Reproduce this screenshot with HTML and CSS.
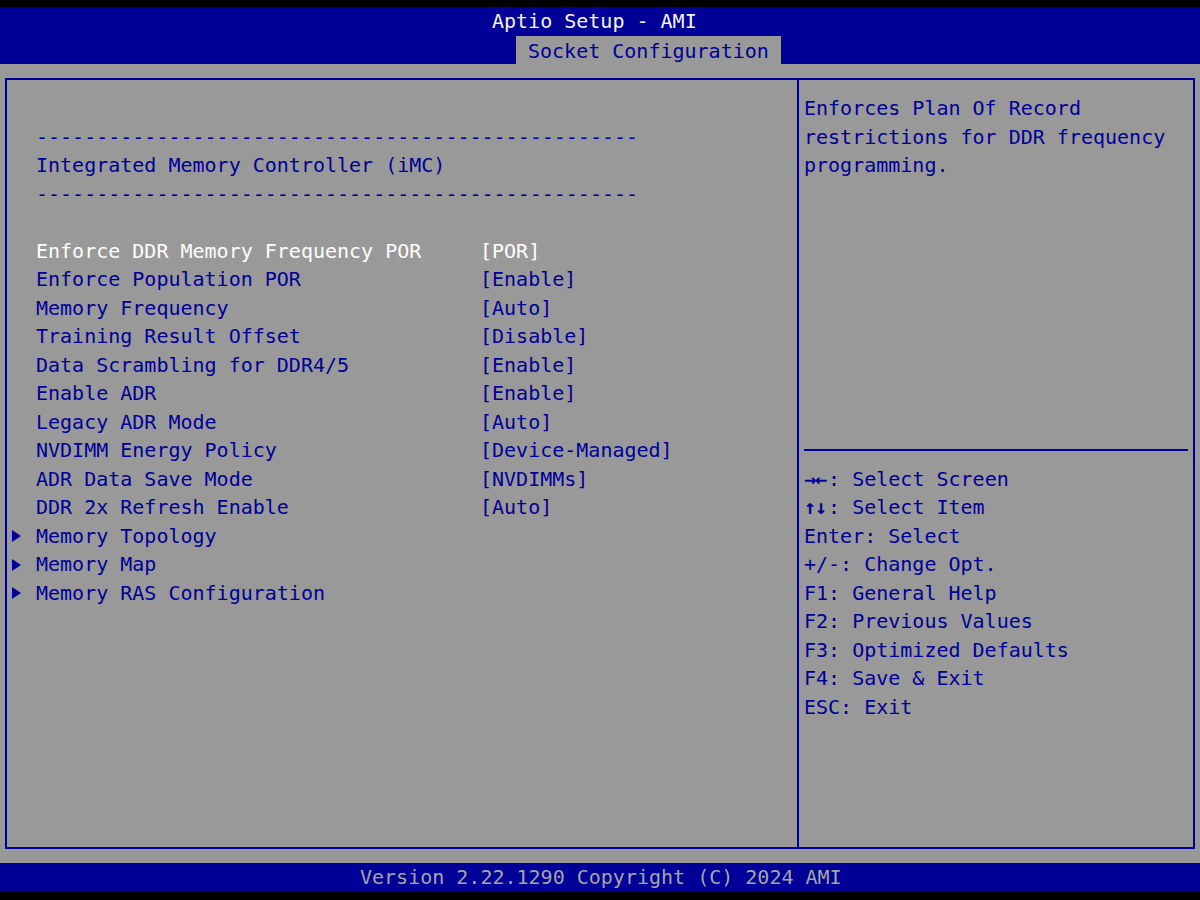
FILE: index.html
```html
<!DOCTYPE html>
<html lang="en">
<head>
    <meta charset="UTF-8">
    <title>Aptio Setup - AMI</title>
    <link rel="stylesheet" href="styles.css">
</head>
<body>
    <!-- title bar with the active tab -->
    <div class="header">
        <div class="title">Aptio Setup - AMI</div>
        <div class="tabs">
            <div class="tab">Socket Configuration</div>
        </div>
    </div>

    <div class="screen">
        <div class="frame">
            <!-- settings list -->
            <div class="pane-left">
                <div class="row"></div>
                <div class="row"><span></span><span class="text">--------------------------------------------------</span></div>
                <div class="row"><span></span><span class="text">Integrated Memory Controller (iMC)</span></div>
                <div class="row"><span></span><span class="text">--------------------------------------------------</span></div>
                <div class="row"></div>

                <div class="row item selected"><span></span><span>Enforce DDR Memory Frequency POR</span><span>[POR]</span></div>
                <div class="row item"><span></span><span>Enforce Population POR</span><span>[Enable]</span></div>
                <div class="row item"><span></span><span>Memory Frequency</span><span>[Auto]</span></div>
                <div class="row item"><span></span><span>Training Result Offset</span><span>[Disable]</span></div>
                <div class="row item"><span></span><span>Data Scrambling for DDR4/5</span><span>[Enable]</span></div>
                <div class="row item"><span></span><span>Enable ADR</span><span>[Enable]</span></div>
                <div class="row item"><span></span><span>Legacy ADR Mode</span><span>[Auto]</span></div>
                <div class="row item"><span></span><span>NVDIMM Energy Policy</span><span>[Device-Managed]</span></div>
                <div class="row item"><span></span><span>ADR Data Save Mode</span><span>[NVDIMMs]</span></div>
                <div class="row item"><span></span><span>DDR 2x Refresh Enable</span><span>[Auto]</span></div>

                <div class="row item"><span class="submenu"></span><span>Memory Topology</span></div>
                <div class="row item"><span class="submenu"></span><span>Memory Map</span></div>
                <div class="row item"><span class="submenu"></span><span>Memory RAS Configuration</span></div>
            </div>

            <!-- help text and key legend -->
            <div class="pane-right">
                <div class="help">
                    Enforces Plan Of Record<br>
                    restrictions for DDR frequency<br>
                    programming.
                </div>
                <div class="divider"><hr></div>
                <div class="keys">
                    <div><span class="arrow">&rarr;&larr;</span>: Select Screen</div>
                    <div><span class="arrow">&uarr;&darr;</span>: Select Item</div>
                    <div>Enter: Select</div>
                    <div>+/-: Change Opt.</div>
                    <div>F1: General Help</div>
                    <div>F2: Previous Values</div>
                    <div>F3: Optimized Defaults</div>
                    <div>F4: Save &amp; Exit</div>
                    <div>ESC: Exit</div>
                </div>
            </div>
        </div>
    </div>

    <div class="footer">Version 2.22.1290 Copyright (C) 2024 AMI</div>
</body>
</html>
```

FILE: styles.css
```css
/* base: text-mode screen, 12px character cells */
body {
    margin: 0;
    padding: 7px 0 9px;
    background-color: #000;
    font-family: "DejaVu Sans Mono", "Liberation Mono", monospace;
    font-size: 20px;
    color: #000098;
}

/* header */
.header {
    background-color: #000098;
    height: 57px;
    display: flex;
    flex-direction: column;
}

.title {
    height: 29px;
    line-height: 29px;
    padding-left: 492px;
    color: #f4f4f4;
}

.tabs {
    display: flex;
    padding-left: 516px;
}

.tab {
    background-color: #999;
    color: #000098;
    height: 28px;
    line-height: 30px;
    padding: 0 12px;
}

/* grey work area */
.screen {
    background-color: #999;
    height: 799px;
    padding: 14px 5px 0 5px;
    box-sizing: border-box;
}

.frame {
    display: flex;
    height: 771px;
    border: 2px solid #000098;
    box-sizing: border-box;
}

.pane-left {
    width: 792px;
    box-sizing: border-box;
    border-right: 2px solid #000098;
    padding: 14px 0 0 5px;
}

.row {
    display: grid;
    grid-template-columns: 24px 444px auto;
    height: 28.5px;
    line-height: 28.5px;
    white-space: pre;
}

.row .text {
    grid-column: 2 / 4;
}

.item.selected {
    color: #fff;
}

/* arrow in front of a sub-menu entry */
.submenu {
    width: 0;
    height: 0;
    margin-top: 8.5px;
    border-left: 9px solid #000098;
    border-top: 6px solid transparent;
    border-bottom: 6px solid transparent;
}

.pane-right {
    flex: 1;
    padding: 14px 5px 0 5px;
}

.help {
    height: 342px;
    line-height: 28.5px;
}

.divider {
    height: 28.5px;
    display: flex;
    align-items: center;
}

.divider hr {
    width: 100%;
    margin: 0;
    border: none;
    border-top: 2px solid #000098;
}

.keys div {
    height: 28.5px;
    line-height: 28.5px;
    white-space: pre;
}

.arrow {
    font-weight: bold;
    letter-spacing: -1px;
    margin-right: 2px;
}

/* footer */
.footer {
    background-color: #000098;
    height: 28px;
    line-height: 28px;
    padding-left: 360px;
    color: #a4a4a4;
}
```
